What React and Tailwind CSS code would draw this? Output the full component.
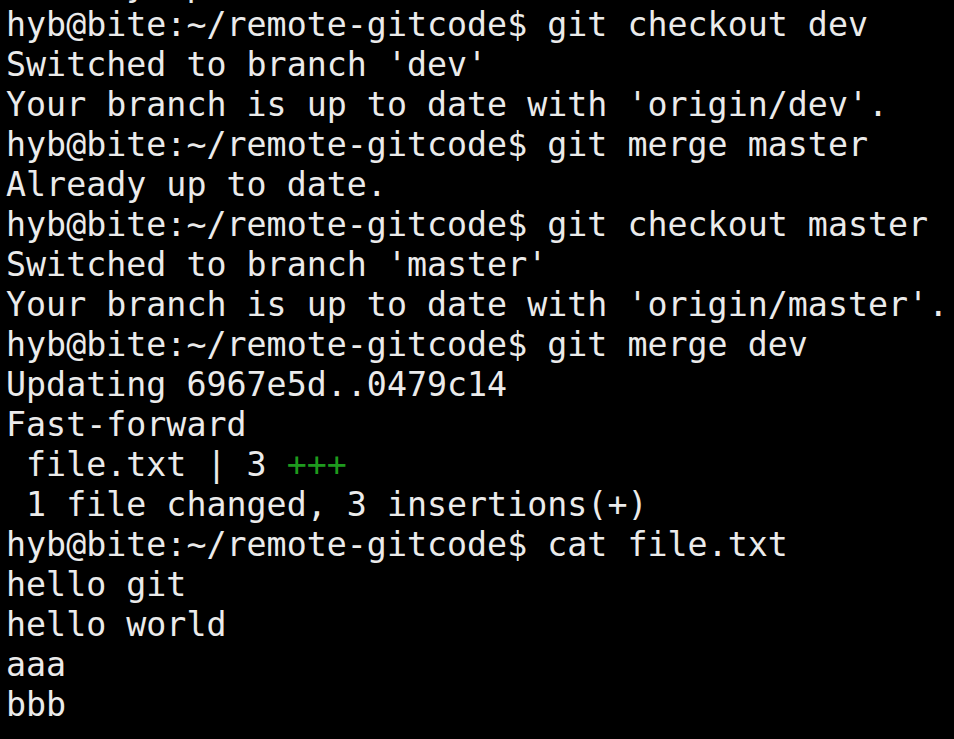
const lines = [
  'Already up to date.',
  "hyb@bite:~/remote-gitcode$ git checkout dev",
  "Switched to branch 'dev'",
  "Your branch is up to date with 'origin/dev'.",
  'hyb@bite:~/remote-gitcode$ git merge master',
  'Already up to date.',
  'hyb@bite:~/remote-gitcode$ git checkout master',
  "Switched to branch 'master'",
  "Your branch is up to date with 'origin/master'.",
  'hyb@bite:~/remote-gitcode$ git merge dev',
  'Updating 6967e5d..0479c14',
  'Fast-forward',
  null,
  ' 1 file changed, 3 insertions(+)',
  'hyb@bite:~/remote-gitcode$ cat file.txt',
  'hello git',
  'hello world',
  'aaa',
  'bbb',
]

export default function App() {
  return (
    <div className="w-[954px] h-[739px] overflow-hidden bg-black">
      <div
        className="-mt-[35px] pl-[6px] text-[33.3px] leading-[40px] text-[#ebebeb] whitespace-pre"
        style={{ fontFamily: '"DejaVu Sans Mono", "Liberation Mono", monospace' }}
      >
        {lines.map((l, i) =>
          l === null ? (
            <div key={i}>
              {' file.txt | 3 '}
              <span className="text-[#1e9a1e]">+++</span>
            </div>
          ) : (
            <div key={i}>{l}</div>
          )
        )}
      </div>
    </div>
  )
}
